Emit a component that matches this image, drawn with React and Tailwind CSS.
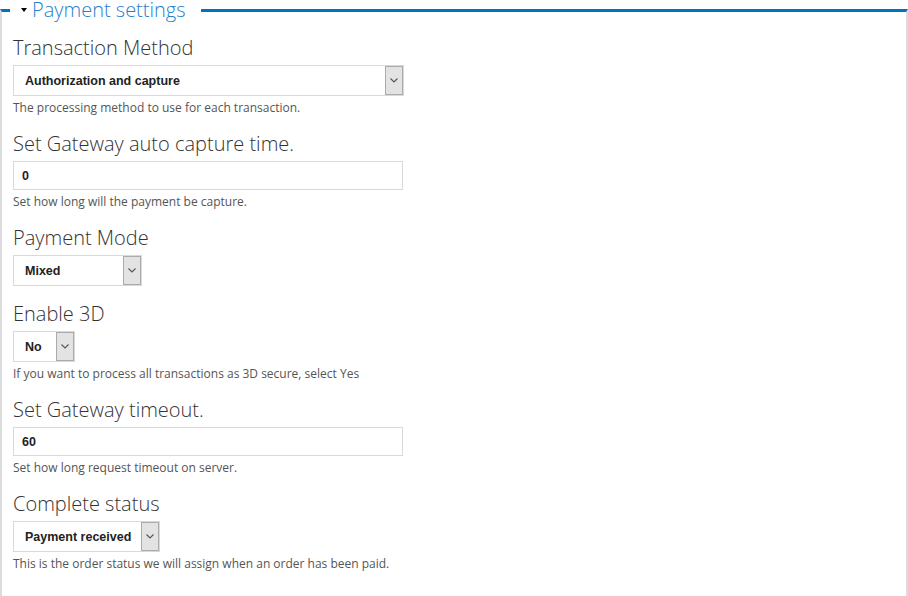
import React from "react";

const Chevron = () => (
  <svg width="8" height="5" viewBox="0 0 8 5" fill="none">
    <polyline points="0.5,0.5 4,4 7.5,0.5" stroke="#555" strokeWidth="1.1" />
  </svg>
);

const SelectBox = ({ value, width }) => (
  <div className={`flex h-[31px] border border-[#d9d9d9] bg-white ${width}`}>
    <span className="flex-1 pl-[11px] pt-[1px] text-[12.5px] font-bold leading-[28px] text-[#222] font-['Liberation_Sans',Arial,sans-serif] whitespace-nowrap">
      {value}
    </span>
    <span className="flex w-[18px] items-center justify-center border border-[#ababab] bg-[#e3e3e3]">
      <Chevron />
    </span>
  </div>
);

const TextBox = ({ value }) => (
  <div className="h-[29px] w-[390px] border border-[#d9d9d9] bg-white pl-[8px] pt-[1px] text-[12.5px] font-bold leading-[26px] text-[#222] font-['Liberation_Sans',Arial,sans-serif]">
    {value}
  </div>
);

const Field = ({ label, help, children }) => (
  <div className="mb-[14px]">
    <h3 className="text-[20px] font-light leading-7 text-[#333]">{label}</h3>
    <div className="mt-[3px]">{children}</div>
    {help && <p className="mt-1 text-[12px] leading-4 text-[#555]">{help}</p>}
  </div>
);

export default function App() {
  return (
    <div className="h-[596px] w-[908px] overflow-hidden bg-white font-['Open_Sans',sans-serif]">
      <fieldset className="min-h-[640px] w-[908px] border-x-2 border-t-[3px] border-b-0 border-x-[#dcdcdc] border-t-[#0073bd]">
        <legend className="ml-[8px] flex h-5 items-center pl-[11px] pr-[15px]">
          <span className="mr-[5px] h-0 w-0 border-x-[3.5px] border-t-[4px] border-x-transparent border-t-black" />
          <span className="text-[20px] font-light leading-5 text-[#1f80cf]">Payment settings</span>
        </legend>

        <div className="pl-[11px] pt-[14px]">
          <Field label="Transaction Method" help="The processing method to use for each transaction.">
            <SelectBox value="Authorization and capture" width="w-[391px]" />
          </Field>

          <Field label="Set Gateway auto capture time." help="Set how long will the payment be capture.">
            <TextBox value="0" />
          </Field>

          <Field label="Payment Mode">
            <SelectBox value="Mixed" width="w-[129px]" />
          </Field>

          <Field label="Enable 3D" help="If you want to process all transactions as 3D secure, select Yes">
            <SelectBox value="No" width="w-[62px]" />
          </Field>

          <Field label="Set Gateway timeout." help="Set how long request timeout on server.">
            <TextBox value="60" />
          </Field>

          <Field label="Complete status" help="This is the order status we will assign when an order has been paid.">
            <SelectBox value="Payment received" width="w-[147px]" />
          </Field>
        </div>
      </fieldset>
    </div>
  );
}
